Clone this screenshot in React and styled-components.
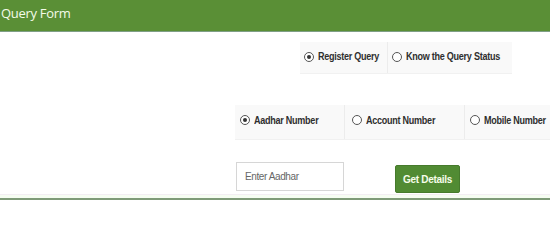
import React, { useState } from "react";
import styled, { createGlobalStyle } from "styled-components";

const GlobalStyle = createGlobalStyle`
  html, body {
    margin: 0;
    padding: 0;
    background: #ffffff;
  }
  body {
    font-family: "Liberation Sans", Arial, sans-serif;
    overflow: hidden;
  }
`;

const Page = styled.div`
  width: 550px;
  height: 200px;
  display: flex;
  flex-direction: column;
  overflow: hidden;
`;

const Header = styled.div`
  height: 31px;
  background-color: #5a8f36;
  color: #f4fbe9;
  font-family: "Open Sans", "Liberation Sans", sans-serif;
  font-size: 13px;
  line-height: 26px;
  padding-left: 1px;
  letter-spacing: -0.3px;
  box-shadow: 0 1px 0 #7f9f86;
`;

const Body = styled.div`
  flex: 1;
  display: flex;
  flex-direction: column;
  padding-top: 11px;
`;

const OptionBox = styled.div`
  display: flex;
  margin-left: ${(p) => p.offset}px;
  height: ${(p) => p.tall}px;
  background-color: #f9f9f9;
  border-bottom: 1px solid #f1f1f1;
  width: ${(p) => (p.boxWidth ? `${p.boxWidth}px` : "auto")};
  margin-top: ${(p) => p.top || 0}px;
  white-space: nowrap;
`;

const Option = styled.label`
  width: ${(p) => p.w}px;
  flex-shrink: 0;
  display: flex;
  align-items: ${(p) => (p.raised ? "flex-start" : "center")};
  padding-top: ${(p) => (p.raised ? "8px" : "0")};
  padding-bottom: ${(p) => (p.raised ? "0" : "4px")};
  gap: 4px;
  padding-left: ${(p) => p.pad}px;
  box-sizing: border-box;
  border-right: ${(p) => (p.last ? "none" : "1px solid #ececec")};
  cursor: pointer;
`;

const OptionText = styled.span`
  display: inline-block;
  font-size: 10.5px;
  letter-spacing: -0.3px;
  font-weight: bold;
  color: #2e2e2e;
  transform: scaleX(0.86);
  transform-origin: left center;
`;

const Radio = styled.span`
  width: 8px;
  height: 8px;
  margin-top: ${(p) => (p.raised ? "2px" : "0")};
  border-radius: 50%;
  border: 1px solid #555;
  background: #fff;
  display: inline-flex;
  align-items: center;
  justify-content: center;
  flex-shrink: 0;
  &::after {
    content: "";
    width: 4px;
    height: 4px;
    border-radius: 50%;
    background: ${(p) => (p.checked ? "#333" : "transparent")};
  }
`;

const SearchRow = styled.div`
  display: flex;
  align-items: flex-start;
  margin-left: 236px;
  margin-top: 22px;
`;

const Input = styled.input`
  width: 108px;
  height: 29px;
  box-sizing: border-box;
  border: 1px solid #d6d6d6;
  padding: 0 8px;
  font-family: inherit;
  font-size: 10px;
  letter-spacing: -0.4px;
  color: #333;
  outline: none;
  &::placeholder {
    color: #666;
  }
`;

const Button = styled.button`
  margin-left: 51px;
  margin-top: 3px;
  width: 65px;
  height: 28px;
  padding: 0;
  border: 1px solid #467a2c;
  border-radius: 2px;
  background-color: #518b33;
  color: #f6fdea;
  font-family: inherit;
  font-size: 10px;
  letter-spacing: -0.3px;
  font-weight: bold;
  white-space: nowrap;
  cursor: pointer;
`;

const Footer = styled.div`
  margin-top: auto;
  height: 6px;
  border-top: 1px solid #f3eef3;
  background-color: #f6fdf2;
  border-bottom: 2px solid #7f9b78;
  box-sizing: border-box;
`;

const queryTypes = [
  { label: "Register Query", w: 88, pad: 4 },
  { label: "Know the Query Status", w: 124, pad: 4 },
];

const searchTypes = [
  { label: "Aadhar Number", w: 110, pad: 5 },
  { label: "Account Number", w: 120, pad: 7 },
  { label: "Mobile Number", w: 100, pad: 5 },
];

const App = () => {
  const [queryType, setQueryType] = useState(0);
  const [searchType, setSearchType] = useState(0);

  return (
    <>
      <GlobalStyle />
      <Page>
        <Header>Query Form</Header>
        <Body>
          <OptionBox offset={300} tall={31} boxWidth={212}>
            {queryTypes.map((q, i) => (
              <Option
                key={q.label}
                w={q.w}
                pad={q.pad}
                raised
                last={i === queryTypes.length - 1}
                onClick={() => setQueryType(i)}
              >
                <Radio raised checked={queryType === i} />
                <OptionText>{q.label}</OptionText>
              </Option>
            ))}
          </OptionBox>
          <OptionBox offset={235} tall={34} top={31}>
            {searchTypes.map((s, i) => (
              <Option
                key={s.label}
                w={s.w}
                pad={s.pad}
                last={i === searchTypes.length - 1}
                onClick={() => setSearchType(i)}
              >
                <Radio checked={searchType === i} />
                <OptionText>{s.label}</OptionText>
              </Option>
            ))}
          </OptionBox>
          <SearchRow>
            <Input placeholder="Enter Aadhar" />
            <Button>Get Details</Button>
          </SearchRow>
          <Footer />
        </Body>
      </Page>
    </>
  );
};

export default App;
